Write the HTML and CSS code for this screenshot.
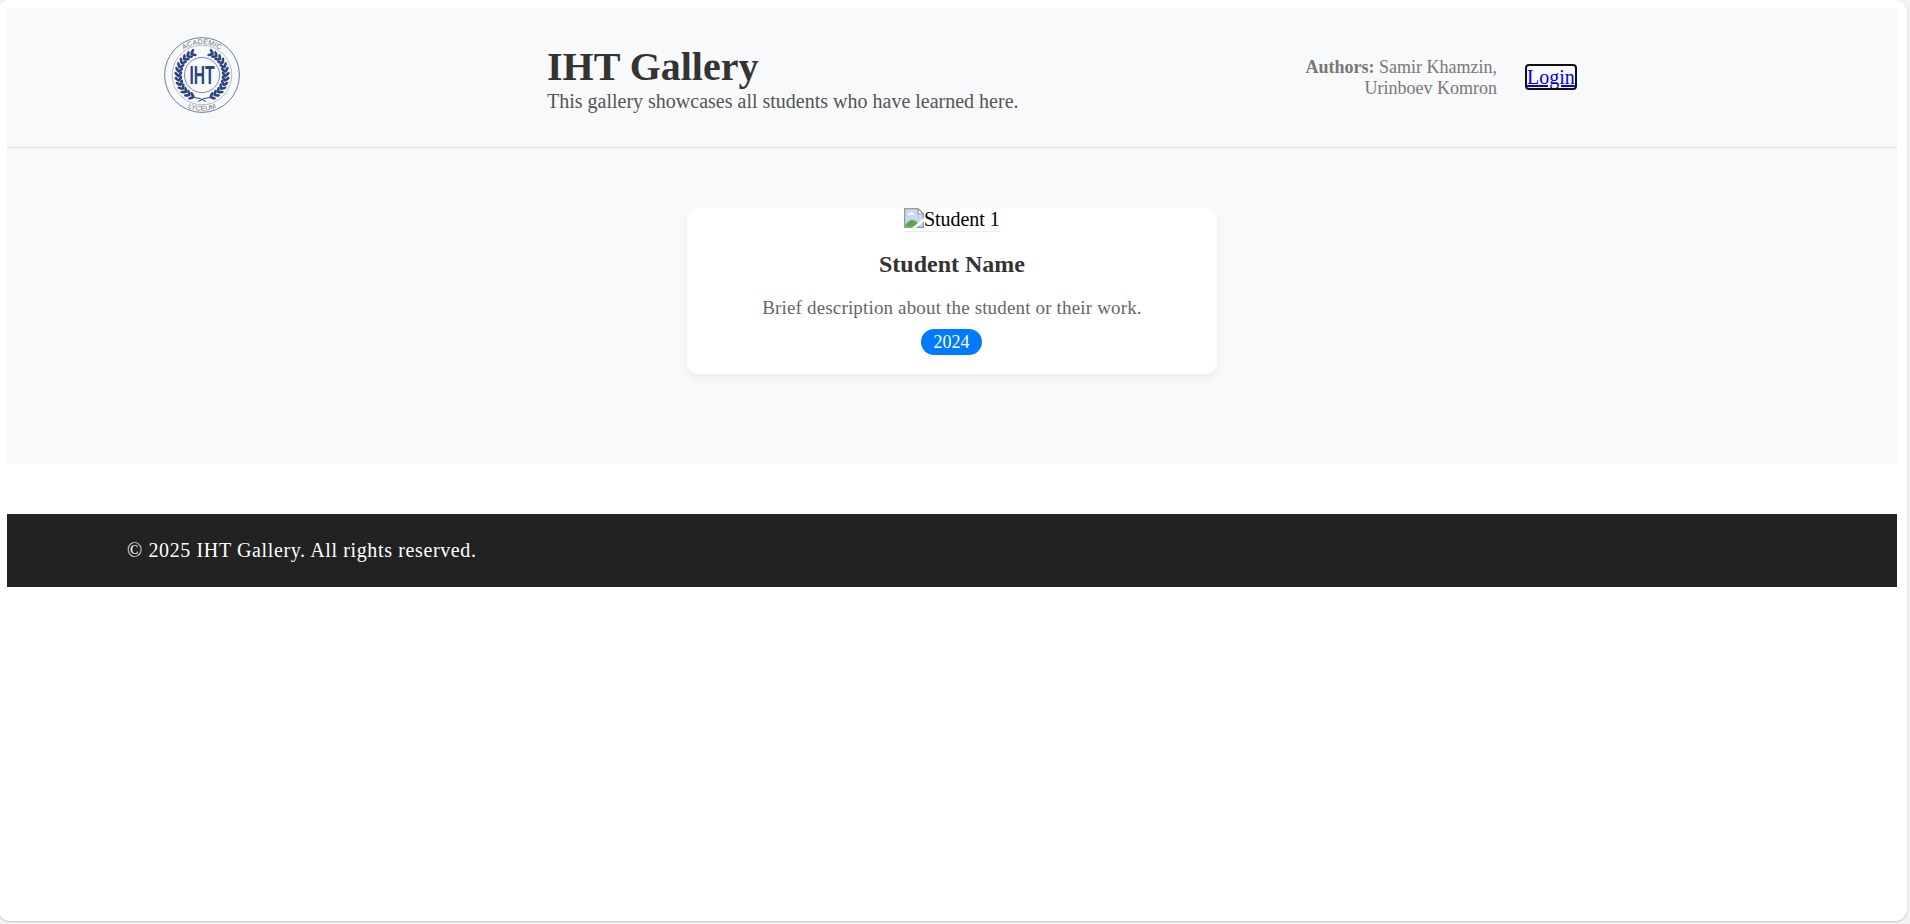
FILE: index.html
```
<!DOCTYPE html>
<html lang="en">
<head>
<meta charset="utf-8">
<title>IHT Gallery</title>
<link rel="stylesheet" href="styles.css">
</head>
<body>
<div class="window">
  <header class="header">
    <svg class="logo" viewBox="-38 -38 76 76" role="img" aria-label="IHT Academic Lyceum">
      <defs>
        <g id="leaf"><ellipse cx="-1" cy="-22" rx="3.2" ry="1.4" transform="rotate(-38 -1 -22)"/><ellipse cx="-1" cy="-25.2" rx="3.2" ry="1.4" transform="rotate(38 -1 -25.2)"/></g>
        <g id="branch">
          <use href="#leaf" transform="rotate(25)"/><use href="#leaf" transform="rotate(36)"/><use href="#leaf" transform="rotate(47)"/><use href="#leaf" transform="rotate(58)"/><use href="#leaf" transform="rotate(69)"/><use href="#leaf" transform="rotate(80)"/><use href="#leaf" transform="rotate(91)"/><use href="#leaf" transform="rotate(102)"/><use href="#leaf" transform="rotate(113)"/><use href="#leaf" transform="rotate(124)"/><use href="#leaf" transform="rotate(135)"/><use href="#leaf" transform="rotate(146)"/><use href="#leaf" transform="rotate(157)"/>
          <path d="M8 22.5Q2 22.5-4 26.5" fill="none" stroke="#2f4580" stroke-width="1"/>
        </g>
        <path id="arc-top" d="M-31 0A31 31 0 0 1 31 0"/>
        <path id="arc-bottom" d="M-35.8 0A35.8 35.8 0 0 0 35.8 0"/>
      </defs>
      <g fill="none"><circle r="37.4" stroke="#626b8b" stroke-width=".9"/><circle r="29.8" stroke="#8d94a8" stroke-width=".6"/><circle r="17.6" stroke="#626b8b" stroke-width=".8"/></g>
      <g fill="#2f4580"><use href="#branch"/><use href="#branch" transform="scale(-1 1)"/></g>
      <text class="logo-ring"><textPath href="#arc-top" startOffset="50%">ACADEMIC</textPath></text>
      <text class="logo-ring"><textPath href="#arc-bottom" startOffset="50%">LYCEUM</textPath></text>
      <text class="logo-name" transform="translate(0 8.8) scale(.6 1)">IHT</text>
    </svg>
    <div class="intro">
      <h1 class="title">IHT Gallery</h1>
      <p class="subtitle">This gallery showcases all students who have learned here.</p>
    </div>
    <p class="authors"><strong>Authors:</strong> Samir Khamzin,<br>Urinboev Komron</p>
    <a class="login" href="#">Login</a>
  </header>
  <main class="gallery">
    <article class="card">
      <div class="photo">
        <svg class="broken" viewBox="0 0 20 20">
          <path d="M.6.6H14L19.4 6V19.4H.6Z" fill="#c6d7f5" stroke="#999" stroke-width="1.3"/>
          <path d="M14 .6V6H19.4Z" fill="#fff" stroke="#999" stroke-width="1.2"/>
          <path d="M3.5 7Q3.5 5 5.5 5.2Q6 3.4 7.8 4Q9 4.4 9 5.5Q10.5 5.6 10.5 7Z" fill="#fff"/>
          <path d="M1.3 18.8V17Q7 9 13 14L15 18.8Z" fill="#55ad3d"/>
          <path d="M20 10V13L12 20H8Z" fill="#fff"/>
        </svg><span class="alt">Student 1</span>
      </div>
      <h2 class="name">Student Name</h2>
      <p class="description">Brief description about the student or their work.</p>
      <span class="year">2024</span>
    </article>
  </main>
  <footer class="footer">© 2025 IHT Gallery. All rights reserved.</footer>
</div>
</body>
</html>
```
FILE: styles.css
```
* { box-sizing: border-box; }
html { background: #f3f3f3; }
body {
  margin: 0;
  height: 924px;
  overflow: hidden;
  background: #f3f3f3;
  font-family: "Liberation Serif", "Times New Roman", serif;
  font-size: 20px;
  line-height: 23px;
}
h1, h2, p { margin: 0; }
.window {
  width: 1909px;
  height: 921px;
  margin-left: -2px;
  padding: 8px 10px 0 9px;
  background: #fff;
  border-radius: 12px;
  box-shadow: 0 1px 2px rgba(0, 0, 0, .2);
}
.header {
  display: flex;
  align-items: flex-start;
  height: 140px;
  padding: 29px 0 0 157px;
  background: #f8f9fb;
  border-bottom: 1px solid #dddfe2;
}
.logo { width: 76px; height: 76px; }
.logo-ring {
  font: 7px "Liberation Sans", sans-serif;
  letter-spacing: .2px;
  text-anchor: middle;
  fill: #687084;
}
.logo-name {
  font: bold 26px "Liberation Sans", sans-serif;
  text-anchor: middle;
  text-rendering: geometricPrecision;
  fill: #2f4580;
}
.intro { width: 600px; margin: 7px 0 0 307px; }
.title { font-size: 40px; line-height: 46px; color: #333; }
.subtitle { color: #555; }
.authors {
  width: 350px;
  padding-top: 20px;
  font-size: 18px;
  line-height: 21px;
  text-align: right;
  color: #777;
}
.login {
  margin: 29px 0 0 30px;
  padding-top: 1px;
  line-height: 21px;
  color: #00e;
  border-radius: 2px;
  outline: 2px solid #101010;
}
.gallery {
  display: flex;
  justify-content: center;
  align-items: flex-start;
  height: 316px;
  padding-top: 60px;
  background: #f8f9fb;
}
.card {
  display: flex;
  flex-direction: column;
  align-items: center;
  width: 530px;
  height: 166px;
  background: #fff;
  border-radius: 12px;
  box-shadow: 0 5px 12px rgba(0, 0, 0, .05);
}
.photo {
  display: flex;
  height: 24px;
  border-bottom: 1px solid #eee;
}
.broken { width: 20px; height: 20px; }
.alt { width: 76px; white-space: nowrap; letter-spacing: -.05px; }
.name { margin-top: 19px; font-size: 24px; line-height: 27px; color: #333; }
.description {
  margin-top: 19px;
  font-size: 19px;
  line-height: 22px;
  letter-spacing: .16px;
  color: #666;
}
.year {
  margin: 10px 1px 0 0;
  padding: 0 12.5px;
  border-radius: 13px;
  background: #007bff;
  color: #fff;
  font-size: 18px;
  line-height: 26px;
}
.footer {
  height: 73px;
  margin-top: 50px;
  padding: 25px 0 0 120px;
  background: #222;
  color: #fff;
  letter-spacing: .625px;
}
```
